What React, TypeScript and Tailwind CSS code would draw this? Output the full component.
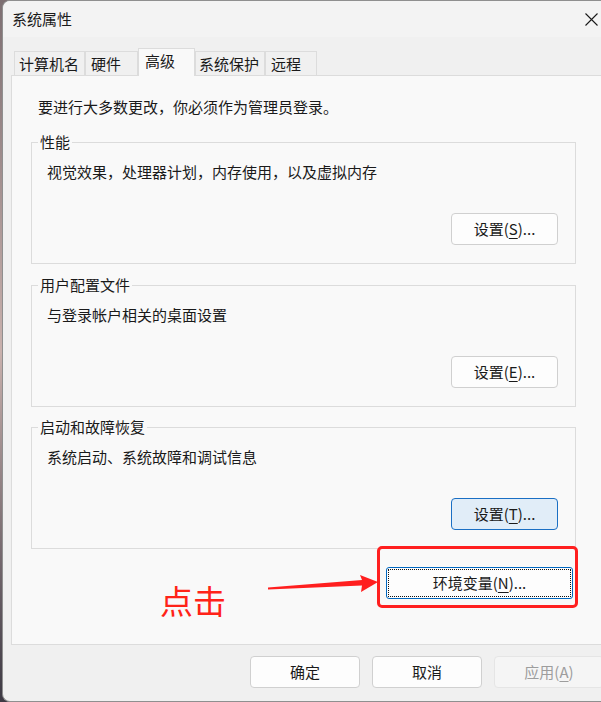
import React from "react";

const font = "font-['Noto_Sans_CJK_SC','Noto_Sans',sans-serif]";

const tabs = [
  { label: "计算机名", cls: "w-[71px] pl-[4px]" },
  { label: "硬件", cls: "w-[53px] pl-[5px]" },
  { label: "高级", cls: "w-[57px] pl-[6px]", active: true },
  { label: "系统保护", cls: "w-[70px] pl-[3px]" },
  { label: "远程", cls: "w-[52px] pl-[5px]" },
];

const Key = ({ k }: { k: string }) => (
  <>
    (<span className="underline underline-offset-[3px] decoration-1">{k}</span>)
  </>
);

const SetupButton = ({ k, focused }: { k: string; focused?: boolean }) => (
  <button
    className={
      focused
        ? "w-[107px] h-[32px] rounded-[4px] border border-[#1a6fc4] bg-[#e1edf8] text-[15px] text-[#1a1a1a]"
        : "w-[107px] h-[32px] rounded-[4px] border border-[#d0d0d0] bg-[#fdfdfd] text-[15px] text-[#1a1a1a]"
    }
  >
    设置<Key k={k} />...
  </button>
);

const Group = ({
  title,
  text,
  k,
  focused,
  className,
}: {
  title: string;
  text: string;
  k: string;
  focused?: boolean;
  className: string;
}) => (
  <fieldset className={`ml-[19px] w-[545px] border border-[#dcdcdc] ${className}`}>
    <legend className="ml-[6px] px-[2px] text-[15px] leading-[20px] text-[#1a1a1a]">{title}</legend>
    <div className="flex flex-col pl-[15px] pr-[17px] pt-[10px] pb-[18px]">
      <p className="text-[15px] leading-[20px] text-[#1a1a1a]">{text}</p>
      <div className="mt-[31px] flex justify-end">
        <SetupButton k={k} focused={focused} />
      </div>
    </div>
  </fieldset>
);

const FooterButton = ({ children, disabled }: { children: React.ReactNode; disabled?: boolean }) => (
  <button
    className={
      disabled
        ? "w-[110px] h-[32px] shrink-0 rounded-[4px] border border-[#e5e5e5] bg-[#f5f5f5] text-[15px] text-[#9d9d9d]"
        : "w-[110px] h-[32px] shrink-0 rounded-[4px] border border-[#d0d0d0] bg-[#fdfdfd] text-[15px] text-[#1a1a1a]"
    }
  >
    {children}
  </button>
);

export default function App() {
  return (
    <div className={`relative flex h-[702px] w-[601px] overflow-hidden bg-gradient-to-b from-[#7d6f72] via-[#c9b1ad] to-[#3e3a44] ${font}`}>
      {/* dialog window */}
      <div className="ml-[2px] flex h-[702px] w-[599px] shrink-0 flex-col overflow-hidden rounded-l-[8px] border border-r-0 border-[#8f8f8f] bg-[#f0f0f0]">
        <div className="flex h-[36px] shrink-0 items-center justify-between bg-[#f3f3f3] pl-[9px]">
          <span className="text-[15px] text-[#1a1a1a]">系统属性</span>
          <svg width="13" height="13" viewBox="0 0 13 13" className="mr-[3px]">
            <path d="M0.5 0.5 L12.5 12.5 M12.5 0.5 L0.5 12.5" stroke="#1a1a1a" strokeWidth="1.1" />
          </svg>
        </div>

        <div className="flex items-end pl-[11px] pt-[11px]">
          {tabs.map((t) =>
            t.active ? (
              <div
                key={t.label}
                className={`relative z-10 -mb-px h-[28px] shrink-0 border border-b-0 border-[#dcdcdc] bg-[#f9f9f9] pt-[2px] text-[15px] leading-[20px] text-[#1a1a1a] ${t.cls}`}
              >
                {t.label}
              </div>
            ) : (
              <div
                key={t.label}
                className={`flex h-[24px] shrink-0 items-center border border-b-0 border-[#dcdcdc] bg-[#f0f0f0] text-[15px] leading-[20px] text-[#1a1a1a] ${t.cls}`}
              >
                {t.label}
              </div>
            )
          )}
        </div>

        <div className="ml-[8px] flex h-[570px] w-[600px] shrink-0 flex-col border border-[#dcdcdc] bg-[#f9f9f9]">
          <p className="pl-[26px] pt-[21px] text-[15px] leading-[20px] text-[#1a1a1a]">
            要进行大多数更改，你必须作为管理员登录。
          </p>
          <Group className="mt-[15px]" title="性能" text="视觉效果，处理器计划，内存使用，以及虚拟内存" k="S" />
          <Group className="mt-[11px]" title="用户配置文件" text="与登录帐户相关的桌面设置" k="E" />
          <Group className="mt-[10px]" title="启动和故障恢复" text="系统启动、系统故障和调试信息" k="T" focused />
          <div className="mt-[18px] pl-[374px]">
            <button className="flex h-[32px] w-[187px] items-center justify-center rounded-[3px] border border-[#0067c0] bg-[#fdfdfd] p-[1px]">
              <span className="flex h-full w-full items-center justify-center border border-dotted border-[#111] text-[15px] text-[#1a1a1a]">
                环境变量<Key k="N" />...
              </span>
            </button>
          </div>
        </div>

        <div className="flex gap-[12px] pl-[247px] pt-[11px]">
          <FooterButton>确定</FooterButton>
          <FooterButton>取消</FooterButton>
          <FooterButton disabled>
            应用<Key k="A" />
          </FooterButton>
        </div>
      </div>

      {/* annotation drawn over the screenshot */}
      <div className="pointer-events-none absolute left-[377px] top-[546px] h-[62px] w-[201px] rounded-[5px] border-[3px] border-[#ff1f1f]" />
      <svg className="pointer-events-none absolute left-0 top-0" width="601" height="702">
        <polygon points="268,587.5 362,580 360,575 378,582 361,592 362,585.5 268,589.5" fill="#ff1f1f" />
      </svg>
      <span className="pointer-events-none absolute left-[160px] top-[580px] text-[33px] leading-[40px] text-[#ff2318]">
        点击
      </span>
    </div>
  );
}
